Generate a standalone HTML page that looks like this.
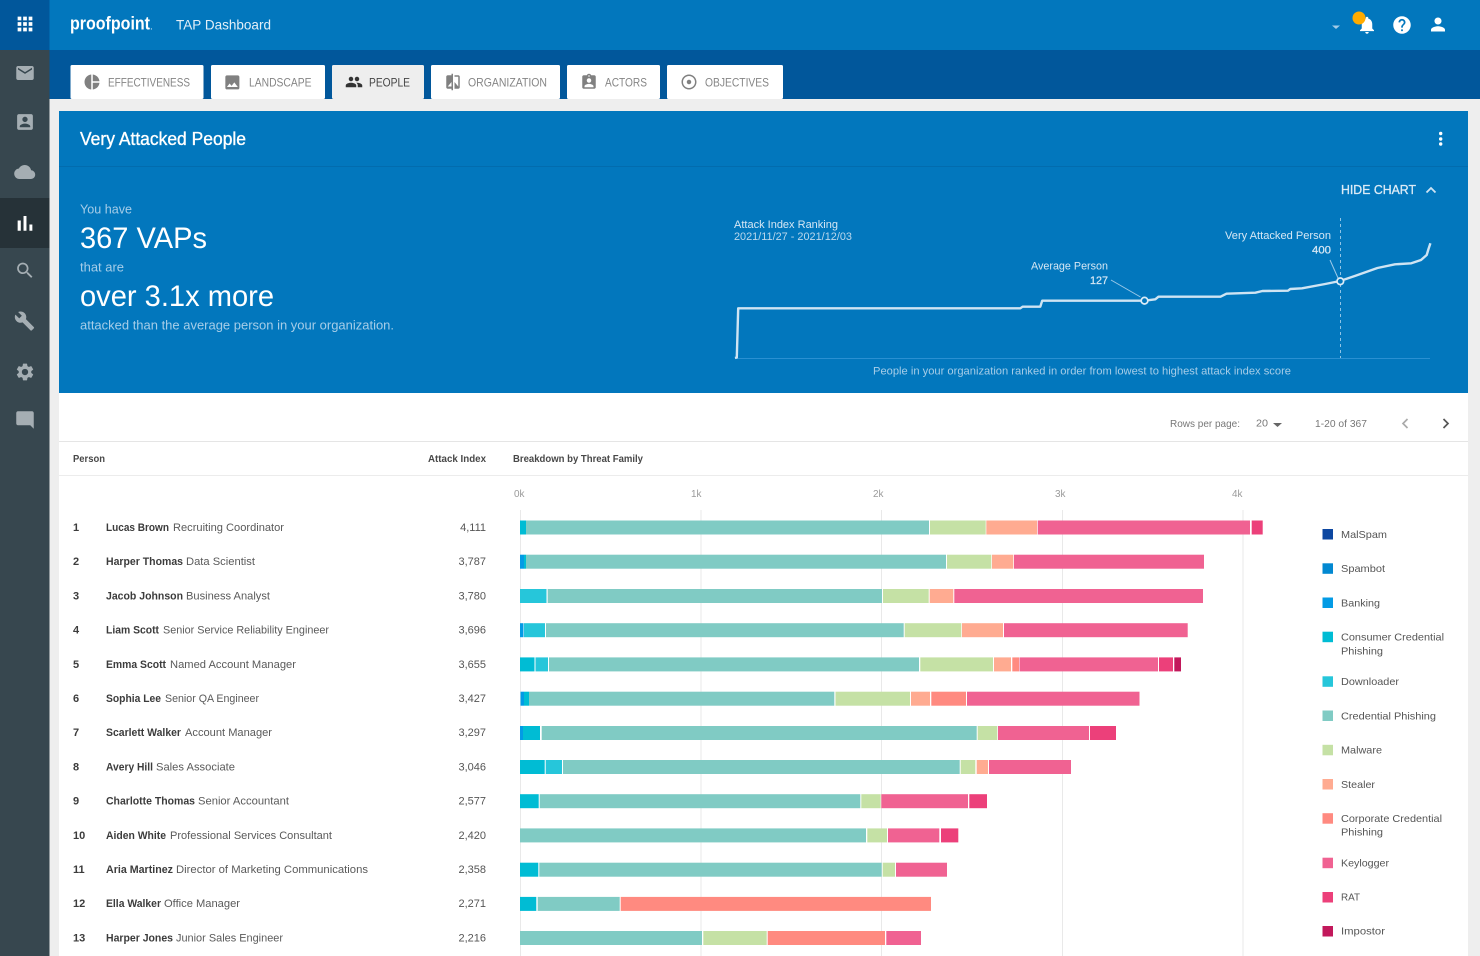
<!DOCTYPE html>
<html lang="en">
<head>
<meta charset="utf-8">
<title>TAP Dashboard - Very Attacked People</title>
<style>
html,body{margin:0;padding:0;width:1480px;height:956px;overflow:hidden;background:#eee}
svg{display:block;font-family:"Liberation Sans",sans-serif;filter:blur(.3px)}
text{dominant-baseline:central;white-space:pre}
.side{fill:#a5aeb3}
.tabi{fill:#808080}
.tabt{font-size:12px;fill:#858585}
.n{font-size:11px;font-weight:700;fill:#3c3c3c}
.t{font-size:11px;fill:#5a5a5a}
.r{font-size:11px;font-weight:700;fill:#3c3c3c}
.v{font-size:11px;fill:#555;text-anchor:end}
.h{font-size:10.5px;font-weight:700;fill:#484848}
.ax{font-size:10.5px;fill:#9a9a9a}
.lg{font-size:10.5px;fill:#555;transform:translateY(.4px)}
.pg{font-size:10.5px;fill:#777}
.lt{font-size:13px;fill:#a6cde8}
.big{font-size:30px;fill:#fff;transform:translateY(.5px)}
.ct{font-size:11px;fill:#d6e7f4}
.cap{font-size:11px;fill:#a6cde8}
.n,.t,.r,.v,.ax,.ct,.cap{transform:translateY(.8px)}
.h,.pg,.tabt{transform:translateY(.2px)}
.grid{stroke:#e9e9e9;stroke-width:1}
.a{fill:#0d47a1}.b{fill:#0288d1}.c{fill:#039be5}.d{fill:#00bcd4}.e{fill:#26c6da}.f{fill:#80cbc4}.g{fill:#c5e1a5}.s{fill:#ffab91}.o{fill:#ff8a80}.k{fill:#f06292}.m{fill:#ec407a}.p{fill:#c2185b}
</style>
</head>
<body>
<svg xmlns="http://www.w3.org/2000/svg" width="1480" height="956" viewBox="0 0 1480 956">
<!-- backgrounds -->
<rect width="1480" height="956" fill="#eeeeee"/>
<rect x="0" y="0" width="1480" height="50" fill="#0277bd"/>
<rect x="49" y="50" width="1431" height="49" fill="#01579b"/>
<rect x="0" y="50" width="49.500" height="906" fill="#37474f"/>
<rect x="0" y="0" width="49.500" height="50" fill="#01579b"/>
<rect x="0" y="198" width="49.500" height="50" fill="#263238"/>

<!-- sidebar icons -->
<path fill="#fff" transform="translate(13.960 12.960) scale(.92)" d="M4 8h4V4H4v4zm6 12h4v-4h-4v4zm-6 0h4v-4H4v4zm0-6h4v-4H4v4zm6 0h4v-4h-4v4zm6-10v4h4V4h-4zm-6 4h4V4h-4v4zm6 6h4v-4h-4v4zm0 6h4v-4h-4v4z"/>
<path class="side" transform="translate(14.500 62.500) scale(.875)" d="M20 4H4c-1.100 0-1.990.9-1.990 2L2 18c0 1.100.9 2 2 2h16c1.100 0 2-.9 2-2V6c0-1.100-.9-2-2-2zm0 4l-8 5-8-5V6l8 5 8-5v2z"/>
<path class="side" transform="translate(14.500 111.500) scale(.875)" d="M3 5v14c0 1.100.89 2 2 2h14c1.100 0 2-.9 2-2V5c0-1.100-.9-2-2-2H5c-1.110 0-2 .9-2 2zm12 4c0 1.660-1.340 3-3 3s-3-1.340-3-3 1.340-3 3-3 3 1.340 3 3zm-9 8c0-2 4-3.100 6-3.100s6 1.100 6 3.100v1H6v-1z"/>
<path class="side" transform="translate(14.200 161.500) scale(.875)" d="M19.350 10.040C18.670 6.590 15.640 4 12 4 9.110 4 6.600 5.640 5.350 8.040 2.340 8.360 0 10.910 0 14c0 3.310 2.690 6 6 6h13c2.760 0 5-2.240 5-5 0-2.640-2.050-4.780-4.650-4.960z"/>
<path fill="#fff" transform="translate(12.400 210.800) scale(1.050)" d="M5 9.200h3V19H5zM10.600 5h2.800v14h-2.800zm5.600 8H19v6h-2.800z"/>
<path class="side" transform="translate(14.500 260) scale(.875)" d="M15.500 14h-.79l-.28-.27C15.410 12.590 16 11.110 16 9.500 16 5.910 13.090 3 9.500 3S3 5.910 3 9.500 5.910 16 9.500 16c1.610 0 3.090-.59 4.230-1.570l.27.28v.79l5 4.990L20.490 19l-4.990-5zm-6 0C7.010 14 5 11.990 5 9.500S7.010 5 9.500 5 14 7.010 14 9.500 11.990 14 9.500 14z"/>
<path class="side" transform="translate(14 310.500) scale(.875)" d="M22.700 19l-9.100-9.100c.9-2.300.4-5-1.500-6.900-2-2-5-2.400-7.400-1.300L9 6 6 9 1.600 4.700C.4 7.100.9 10.100 2.900 12.100c1.900 1.900 4.600 2.400 6.900 1.500l9.100 9.100c.4.4 1 .4 1.400 0l2.300-2.300c.5-.4.5-1.100.1-1.400z"/>
<path class="side" transform="translate(14.500 361.500) scale(.875)" d="M19.140 12.940c.04-.3.06-.61.06-.94 0-.32-.02-.64-.07-.94l2.030-1.580c.18-.14.23-.41.12-.61l-1.920-3.320c-.12-.22-.37-.29-.59-.22l-2.390.96c-.5-.38-1.030-.7-1.620-.94l-.36-2.540c-.04-.24-.24-.41-.48-.41h-3.840c-.24 0-.43.17-.47.41l-.36 2.540c-.59.24-1.130.57-1.620.94l-2.390-.96c-.22-.08-.47 0-.59.22L2.740 8.870c-.12.21-.08.47.12.61l2.030 1.580c-.05.3-.09.63-.09.94s.02.64.07.94l-2.030 1.580c-.18.14-.23.41-.12.61l1.920 3.320c.12.22.37.29.59.22l2.390-.96c.5.38 1.030.7 1.620.94l.36 2.540c.05.24.24.41.48.41h3.840c.24 0 .44-.17.47-.41l.36-2.540c.59-.24 1.130-.56 1.620-.94l2.390.96c.22.08.47 0 .59-.22l1.920-3.320c.12-.22.07-.47-.12-.61l-2.010-1.580zM12 15.600c-1.980 0-3.600-1.620-3.600-3.600s1.620-3.600 3.600-3.600 3.600 1.620 3.600 3.600-1.620 3.600-3.600 3.600z"/>
<path class="side" transform="translate(25 420) scale(-.875 .875) translate(-12 -12)" d="M20 2H4c-1.100 0-2 .9-2 2v18l4-4h14c1.100 0 2-.9 2-2V4c0-1.100-.9-2-2-2z"/>

<!-- top bar -->
<text x="70" y="23.500" font-size="18" font-weight="700" fill="#fff" textLength="80" lengthAdjust="spacingAndGlyphs">proofpoint</text>
<text x="150" y="27" font-size="10" fill="#d8e9f5">.</text>
<text x="176" y="24.500" font-size="14" fill="#e3eff8" textLength="95" lengthAdjust="spacingAndGlyphs">TAP Dashboard</text>
<path fill="#a3cbe7" d="M1332 25.500h8l-4 3.500z"/>
<path fill="#fff" transform="translate(1356.500 14.500) scale(.875)" d="M12 22c1.100 0 2-.9 2-2h-4c0 1.100.89 2 2 2zm6-6v-5c0-3.070-1.640-5.640-4.500-6.320V4c0-.83-.67-1.500-1.500-1.500s-1.500.67-1.500 1.500v.68C7.630 5.360 6 7.920 6 11v5l-2 2v1h16v-1l-2-2z"/>
<circle cx="1359" cy="18" r="6.500" fill="#ffab00"/>
<path fill="#fff" transform="translate(1391.500 14.500) scale(.875)" d="M12 2C6.480 2 2 6.480 2 12s4.480 10 10 10 10-4.480 10-10S17.520 2 12 2zm1 17h-2v-2h2v2zm2.070-7.750l-.9.92C13.450 12.900 13 13.500 13 15h-2v-.5c0-1.100.45-2.100 1.170-2.830l1.240-1.260c.37-.36.59-.86.59-1.410 0-1.100-.9-2-2-2s-2 .9-2 2H8c0-2.210 1.790-4 4-4s4 1.790 4 4c0 .88-.36 1.680-.93 2.250z"/>
<path fill="#fff" transform="translate(1427.500 14) scale(.875)" d="M12 12c2.210 0 4-1.790 4-4s-1.790-4-4-4-4 1.790-4 4 1.790 4 4 4zm0 2c-2.670 0-8 1.340-8 4v2h16v-2c0-2.660-5.330-4-8-4z"/>

<!-- tabs -->
<rect x="70.500" y="65" width="133" height="34" rx="1.500" fill="#fff"/>
<rect x="211" y="65" width="114" height="34" rx="1.500" fill="#fff"/>
<rect x="332" y="65" width="92" height="34" rx="1.500" fill="#eeeeee"/>
<rect x="431" y="65" width="129" height="34" rx="1.500" fill="#fff"/>
<rect x="567" y="65" width="93" height="34" rx="1.500" fill="#fff"/>
<rect x="667" y="65" width="116" height="34" rx="1.500" fill="#fff"/>
<path class="tabi" transform="translate(83 73) scale(.75)" d="M11 2v20c-5.070-.5-9-4.790-9-10s3.930-9.500 9-10zm2.030 0v8.990H22c-.47-4.740-4.240-8.520-8.970-8.990zm0 11.010V22c4.740-.47 8.500-4.250 8.970-8.990h-8.970z"/>
<text class="tabt" x="108" y="82.500" textLength="82" lengthAdjust="spacingAndGlyphs">EFFECTIVENESS</text>
<path class="tabi" transform="translate(223 73) scale(.78)" d="M21 19V5c0-1.100-.9-2-2-2H5c-1.100 0-2 .9-2 2v14c0 1.100.9 2 2 2h14c1.100 0 2-.9 2-2zM8.500 13.500l2.500 3.010L14.500 12l4.500 6H5l3.500-4.500z"/>
<text class="tabt" x="249" y="82.500" textLength="62.500" lengthAdjust="spacingAndGlyphs">LANDSCAPE</text>
<path fill="#333" transform="translate(345 73) scale(.75)" d="M16 11c1.660 0 2.990-1.340 2.990-3S17.660 5 16 5c-1.660 0-3 1.340-3 3s1.340 3 3 3zm-8 0c1.660 0 2.990-1.340 2.990-3S9.660 5 8 5C6.340 5 5 6.340 5 8s1.340 3 3 3zm0 2c-2.330 0-7 1.170-7 3.500V19h14v-2.500c0-2.330-4.670-3.500-7-3.500zm8 0c-.29 0-.62.02-.97.05 1.160.84 1.970 1.970 1.970 3.450V19h6v-2.500c0-2.330-4.670-3.500-7-3.500z"/>
<text class="tabt" style="fill:#444" x="369" y="82.500" textLength="41" lengthAdjust="spacingAndGlyphs">PEOPLE</text>
<path class="tabi" transform="translate(444 73) scale(.75)" d="M10 3H5c-1.100 0-2 .9-2 2v14c0 1.100.9 2 2 2h5v2h2V1h-2v2zm0 15H5l5-6v6zm9-15h-5v2h5v13l-5-6v9h5c1.100 0 2-.9 2-2V5c0-1.100-.9-2-2-2z"/>
<text class="tabt" x="468" y="82.500" textLength="79" lengthAdjust="spacingAndGlyphs">ORGANIZATION</text>
<path class="tabi" transform="translate(580 73) scale(.75)" d="M19 3h-4.180C14.400 1.840 13.300 1 12 1c-1.300 0-2.400.84-2.820 2H5c-1.100 0-2 .9-2 2v14c0 1.100.9 2 2 2h14c1.100 0 2-.9 2-2V5c0-1.100-.9-2-2-2zm-7 0c.55 0 1 .45 1 1s-.45 1-1 1-1-.45-1-1 .45-1 1-1zm0 4c1.660 0 3 1.340 3 3s-1.340 3-3 3-3-1.340-3-3 1.340-3 3-3zm6 12H6v-1.400c0-2 4-3.100 6-3.100s6 1.100 6 3.100V19z"/>
<text class="tabt" x="605" y="82.500" textLength="42" lengthAdjust="spacingAndGlyphs">ACTORS</text>
<path class="tabi" transform="translate(680 73) scale(.75)" d="M12 2C6.490 2 2 6.490 2 12s4.490 10 10 10 10-4.490 10-10S17.510 2 12 2zm0 18c-4.410 0-8-3.590-8-8s3.590-8 8-8 8 3.590 8 8-3.590 8-8 8zm3-8c0 1.660-1.340 3-3 3s-3-1.340-3-3 1.340-3 3-3 3 1.340 3 3z"/>
<text class="tabt" x="705" y="82.500" textLength="64" lengthAdjust="spacingAndGlyphs">OBJECTIVES</text>

<!-- panel -->
<rect x="59" y="393" width="1409" height="563" fill="#fff"/>
<rect x="59" y="111" width="1409" height="282" fill="#0277bd"/>
<rect x="59" y="166" width="1409" height="1" fill="#026cae"/>
<text x="80" y="139" font-size="18" fill="#fff" stroke="#fff" stroke-width=".35" textLength="166" lengthAdjust="spacingAndGlyphs">Very Attacked People</text>
<circle cx="1440.700" cy="133.500" r="1.700" fill="#fff"/><circle cx="1440.700" cy="139" r="1.700" fill="#fff"/><circle cx="1440.700" cy="144" r="1.700" fill="#fff"/>

<text class="lt" x="80" y="209" textLength="52" lengthAdjust="spacingAndGlyphs">You have</text>
<text class="big" x="80" y="238" textLength="127" lengthAdjust="spacingAndGlyphs">367 VAPs</text>
<text class="lt" x="80" y="267" textLength="44" lengthAdjust="spacingAndGlyphs">that are</text>
<text class="big" x="80" y="296" textLength="194" lengthAdjust="spacingAndGlyphs">over 3.1x more</text>
<text class="lt" x="80" y="325" textLength="314" lengthAdjust="spacingAndGlyphs">attacked than the average person in your organization.</text>

<text x="1341" y="190" font-size="12.500" fill="#dcebf6" stroke="#dcebf6" stroke-width=".3" textLength="75" lengthAdjust="spacingAndGlyphs">HIDE CHART</text>
<path fill="none" stroke="#cfe3f2" stroke-width="1.800" d="M1426.500 192.500l4.500-4.500 4.500 4.500"/>

<!-- ranking chart -->
<text class="ct" x="734" y="224" textLength="104" lengthAdjust="spacingAndGlyphs">Attack Index Ranking</text>
<text class="ct" style="fill:#bcd8ec" x="734" y="236" textLength="118" lengthAdjust="spacingAndGlyphs">2021/11/27 - 2021/12/03</text>
<path stroke="#2a90d2" stroke-width="1" d="M735 358.500H1430"/>
<path stroke="#8fc4e6" stroke-width="1" stroke-dasharray="3 3" d="M1340.500 218V358"/>
<path fill="none" stroke="#9cc9e8" stroke-width="1" d="M1111 280L1140.500 297M1330 260L1338 278"/>
<path fill="none" stroke="#cfe4f3" stroke-width="2.400" stroke-linejoin="round" d="M735 358L736.800 357.500L738.200 308.300H1020.300L1022.600 306.700H1040.300L1042.200 300.700H1144.600L1155.300 299.300L1158.500 296.700H1220.500L1226.500 293.700L1255.400 292.700L1262.400 291L1288 290.700L1290.300 289L1302 288.300L1325.200 284L1340 281L1355.500 275.700L1377.400 268L1395 264.300L1411.300 263.300L1421 260L1426.700 255L1428.500 249L1430.400 243.300"/>
<circle cx="1144.500" cy="300.700" r="3.300" fill="#0277bd" stroke="#dcebf6" stroke-width="1.700"/>
<circle cx="1340.300" cy="281.300" r="3.300" fill="#0277bd" stroke="#dcebf6" stroke-width="1.700"/>
<text class="ct" x="1031" y="265.500" textLength="77" lengthAdjust="spacingAndGlyphs">Average Person</text>
<text class="ct" x="1090" y="280" textLength="18" lengthAdjust="spacingAndGlyphs" stroke="#d6e7f4" stroke-width=".25">127</text>
<text class="ct" x="1225" y="235" textLength="106" lengthAdjust="spacingAndGlyphs">Very Attacked Person</text>
<text class="ct" x="1312" y="249.500" textLength="19" lengthAdjust="spacingAndGlyphs" stroke="#d6e7f4" stroke-width=".25">400</text>
<text class="cap" x="873" y="370.500" textLength="418" lengthAdjust="spacingAndGlyphs">People in your organization ranked in order from lowest to highest attack index score</text>

<!-- pager -->
<text class="pg" x="1170" y="424" textLength="70" lengthAdjust="spacingAndGlyphs">Rows per page:</text>
<text class="pg" x="1256" y="423.500" textLength="12" lengthAdjust="spacingAndGlyphs">20</text>
<path fill="#666" d="M1273 423h9l-4.500 4z"/>
<text class="pg" x="1315" y="424" textLength="52" lengthAdjust="spacingAndGlyphs">1-20 of 367</text>
<path fill="none" stroke="#aaa" stroke-width="1.700" d="M1407.500 419l-4.500 4.500 4.500 4.500"/>
<path fill="none" stroke="#555" stroke-width="1.700" d="M1443.500 419l4.500 4.500-4.500 4.500"/>

<!-- table header -->
<rect x="59" y="441" width="1409" height="1" fill="#e5e5e5"/>
<rect x="59" y="475" width="1409" height="1" fill="#ececec"/>
<text class="h" x="73" y="459" textLength="32" lengthAdjust="spacingAndGlyphs">Person</text>
<text class="h" x="428" y="459" textLength="58" lengthAdjust="spacingAndGlyphs">Attack Index</text>
<text class="h" x="513" y="459" textLength="130" lengthAdjust="spacingAndGlyphs">Breakdown by Threat Family</text>

<!-- axis -->
<text class="ax" x="514" y="493" textLength="10.500" lengthAdjust="spacingAndGlyphs">0k</text>
<text class="ax" x="691" y="493" textLength="10.500" lengthAdjust="spacingAndGlyphs">1k</text>
<text class="ax" x="873" y="493" textLength="10.500" lengthAdjust="spacingAndGlyphs">2k</text>
<text class="ax" x="1055" y="493" textLength="10.500" lengthAdjust="spacingAndGlyphs">3k</text>
<text class="ax" x="1232" y="493" textLength="10.500" lengthAdjust="spacingAndGlyphs">4k</text>
<path class="grid" d="M520.500 510V956M701 510V956M881.500 510V956M1062.500 510V956M1243 510V956"/>

<!-- rows -->
<text class="r" x="73" y="527">1</text><text class="n" x="106" y="527" textLength="63" lengthAdjust="spacingAndGlyphs">Lucas Brown</text><text class="t" x="173" y="527" textLength="111" lengthAdjust="spacingAndGlyphs">Recruiting Coordinator</text><text class="v" x="486" y="527">4,111</text>
<rect class="d" x="520" y="520.500" width="6" height="14"/><rect class="f" x="526" y="520.500" width="403" height="14"/><rect class="g" x="930" y="520.500" width="55.700" height="14"/><rect class="s" x="986.300" y="520.500" width="50.700" height="14"/><rect class="k" x="1037.700" y="520.500" width="212.300" height="14"/><rect class="m" x="1251.700" y="520.500" width="11" height="14"/>

<text class="r" x="73" y="561">2</text><text class="n" x="106" y="561" textLength="77" lengthAdjust="spacingAndGlyphs">Harper Thomas</text><text class="t" x="186" y="561" textLength="69" lengthAdjust="spacingAndGlyphs">Data Scientist</text><text class="v" x="486" y="561">3,787</text>
<rect class="c" x="520" y="554.700" width="4" height="14"/><rect class="d" x="524" y="554.700" width="2" height="14"/><rect class="f" x="526" y="554.700" width="420" height="14"/><rect class="g" x="947" y="554.700" width="44.300" height="14"/><rect class="s" x="992" y="554.700" width="21.300" height="14"/><rect class="k" x="1014" y="554.700" width="190" height="14"/>

<text class="r" x="73" y="595.500">3</text><text class="n" x="106" y="595.500" textLength="77" lengthAdjust="spacingAndGlyphs">Jacob Johnson</text><text class="t" x="186" y="595.500" textLength="84" lengthAdjust="spacingAndGlyphs">Business Analyst</text><text class="v" x="486" y="595.500">3,780</text>
<rect class="e" x="520" y="589" width="26.500" height="14"/><rect class="f" x="547.700" y="589" width="334.300" height="14"/><rect class="g" x="883" y="589" width="45.700" height="14"/><rect class="s" x="929.700" y="589" width="23.600" height="14"/><rect class="k" x="954.300" y="589" width="248.700" height="14"/>

<text class="r" x="73" y="629.700">4</text><text class="n" x="106" y="629.700" textLength="53" lengthAdjust="spacingAndGlyphs">Liam Scott</text><text class="t" x="163" y="629.700" textLength="166" lengthAdjust="spacingAndGlyphs">Senior Service Reliability Engineer</text><text class="v" x="486" y="629.700">3,696</text>
<rect class="c" x="520" y="623.200" width="3.500" height="14"/><rect class="e" x="524" y="623.200" width="21" height="14"/><rect class="f" x="546" y="623.200" width="357.700" height="14"/><rect class="g" x="904.700" y="623.200" width="56.600" height="14"/><rect class="s" x="962" y="623.200" width="41" height="14"/><rect class="k" x="1004" y="623.200" width="183.700" height="14"/>

<text class="r" x="73" y="664">5</text><text class="n" x="106" y="664" textLength="60" lengthAdjust="spacingAndGlyphs">Emma Scott</text><text class="t" x="170" y="664" textLength="126" lengthAdjust="spacingAndGlyphs">Named Account Manager</text><text class="v" x="486" y="664">3,655</text>
<rect class="d" x="520" y="657.400" width="14.500" height="14"/><rect class="e" x="535.500" y="657.400" width="12.500" height="14"/><rect class="f" x="549" y="657.400" width="370" height="14"/><rect class="g" x="920.300" y="657.400" width="72.700" height="14"/><rect class="s" x="994" y="657.400" width="17" height="14"/><rect class="o" x="1012.300" y="657.400" width="6.700" height="14"/><rect class="k" x="1019.500" y="657.400" width="138.500" height="14"/><rect class="m" x="1159" y="657.400" width="14" height="14"/><rect class="p" x="1174.300" y="657.400" width="6.700" height="14"/>

<text class="r" x="73" y="698">6</text><text class="n" x="106" y="698" textLength="55" lengthAdjust="spacingAndGlyphs">Sophia Lee</text><text class="t" x="165" y="698" textLength="94" lengthAdjust="spacingAndGlyphs">Senior QA Engineer</text><text class="v" x="486" y="698">3,427</text>
<rect class="c" x="520.500" y="691.700" width="3.500" height="14"/><rect class="d" x="524" y="691.700" width="5" height="14"/><rect class="f" x="529" y="691.700" width="305.300" height="14"/><rect class="g" x="835.500" y="691.700" width="74.500" height="14"/><rect class="s" x="911" y="691.700" width="19" height="14"/><rect class="o" x="931.300" y="691.700" width="34.700" height="14"/><rect class="k" x="967" y="691.700" width="172.500" height="14"/>

<text class="r" x="73" y="732.300">7</text><text class="n" x="106" y="732.300" textLength="75" lengthAdjust="spacingAndGlyphs">Scarlett Walker</text><text class="t" x="185" y="732.300" textLength="87" lengthAdjust="spacingAndGlyphs">Account Manager</text><text class="v" x="486" y="732.300">3,297</text>
<rect class="c" x="520" y="726" width="3" height="14"/><rect class="d" x="523" y="726" width="17" height="14"/><rect class="f" x="541.700" y="726" width="435" height="14"/><rect class="g" x="977.700" y="726" width="19.600" height="14"/><rect class="k" x="998" y="726" width="91" height="14"/><rect class="m" x="1090" y="726" width="26" height="14"/>

<text class="r" x="73" y="766.500">8</text><text class="n" x="106" y="766.500" textLength="47" lengthAdjust="spacingAndGlyphs">Avery Hill</text><text class="t" x="156" y="766.500" textLength="79" lengthAdjust="spacingAndGlyphs">Sales Associate</text><text class="v" x="486" y="766.500">3,046</text>
<rect class="d" x="520" y="760" width="24.700" height="14"/><rect class="e" x="545.700" y="760" width="16.300" height="14"/><rect class="f" x="563" y="760" width="396.700" height="14"/><rect class="g" x="960.700" y="760" width="14.600" height="14"/><rect class="s" x="976.700" y="760" width="11.300" height="14"/><rect class="k" x="989" y="760" width="82" height="14"/>

<text class="r" x="73" y="800.700">9</text><text class="n" x="106" y="800.700" textLength="89" lengthAdjust="spacingAndGlyphs">Charlotte Thomas</text><text class="t" x="198" y="800.700" textLength="91" lengthAdjust="spacingAndGlyphs">Senior Accountant</text><text class="v" x="486" y="800.700">2,577</text>
<rect class="d" x="520" y="794.200" width="18.700" height="14"/><rect class="f" x="539.700" y="794.200" width="320.600" height="14"/><rect class="g" x="861.300" y="794.200" width="19.400" height="14"/><rect class="k" x="881.300" y="794.200" width="86.700" height="14"/><rect class="m" x="969.300" y="794.200" width="17.700" height="14"/>

<text class="r" x="73" y="835">10</text><text class="n" x="106" y="835" textLength="60" lengthAdjust="spacingAndGlyphs">Aiden White</text><text class="t" x="170" y="835" textLength="162" lengthAdjust="spacingAndGlyphs">Professional Services Consultant</text><text class="v" x="486" y="835">2,420</text>
<rect class="f" x="520" y="828.400" width="346" height="14"/><rect class="g" x="867.300" y="828.400" width="19.700" height="14"/><rect class="k" x="888" y="828.400" width="51.300" height="14"/><rect class="m" x="941" y="828.400" width="17.300" height="14"/>

<text class="r" x="73" y="869">11</text><text class="n" x="106" y="869" textLength="67" lengthAdjust="spacingAndGlyphs">Aria Martinez</text><text class="t" x="176" y="869" textLength="192" lengthAdjust="spacingAndGlyphs">Director of Marketing Communications</text><text class="v" x="486" y="869">2,358</text>
<rect class="d" x="520" y="862.700" width="18.300" height="14"/><rect class="f" x="539.300" y="862.700" width="342.400" height="14"/><rect class="g" x="882.700" y="862.700" width="12.300" height="14"/><rect class="k" x="896" y="862.700" width="51" height="14"/>

<text class="r" x="73" y="903.300">12</text><text class="n" x="106" y="903.300" textLength="55" lengthAdjust="spacingAndGlyphs">Ella Walker</text><text class="t" x="164" y="903.300" textLength="76" lengthAdjust="spacingAndGlyphs">Office Manager</text><text class="v" x="486" y="903.300">2,271</text>
<rect class="d" x="520" y="896.900" width="16.300" height="14"/><rect class="f" x="537.700" y="896.900" width="82" height="14"/><rect class="o" x="620.700" y="896.900" width="310.300" height="14"/>

<text class="r" x="73" y="937.500">13</text><text class="n" x="106" y="937.500" textLength="67" lengthAdjust="spacingAndGlyphs">Harper Jones</text><text class="t" x="176" y="937.500" textLength="107" lengthAdjust="spacingAndGlyphs">Junior Sales Engineer</text><text class="v" x="486" y="937.500">2,216</text>
<rect class="f" x="520" y="931" width="182" height="14"/><rect class="g" x="703.300" y="931" width="63.400" height="14"/><rect class="o" x="767.700" y="931" width="117.300" height="14"/><rect class="k" x="886.300" y="931" width="34.700" height="14"/>

<!-- legend -->
<rect class="a" x="1322.500" y="529" width="10.500" height="10.500"/><text class="lg" x="1341" y="534.500" textLength="46" lengthAdjust="spacingAndGlyphs">MalSpam</text>
<rect class="b" x="1322.500" y="563.300" width="10.500" height="10.500"/><text class="lg" x="1341" y="568.500" textLength="44" lengthAdjust="spacingAndGlyphs">Spambot</text>
<rect class="c" x="1322.500" y="597.500" width="10.500" height="10.500"/><text class="lg" x="1341" y="603" textLength="39" lengthAdjust="spacingAndGlyphs">Banking</text>
<rect class="d" x="1322.500" y="631.700" width="10.500" height="10.500"/><text class="lg" x="1341" y="637" textLength="103" lengthAdjust="spacingAndGlyphs">Consumer Credential</text><text class="lg" x="1341" y="651" textLength="42" lengthAdjust="spacingAndGlyphs">Phishing</text>
<rect class="e" x="1322.500" y="676.300" width="10.500" height="10.500"/><text class="lg" x="1341" y="681.500" textLength="58" lengthAdjust="spacingAndGlyphs">Downloader</text>
<rect class="f" x="1322.500" y="710.500" width="10.500" height="10.500"/><text class="lg" x="1341" y="716" textLength="95" lengthAdjust="spacingAndGlyphs">Credential Phishing</text>
<rect class="g" x="1322.500" y="744.800" width="10.500" height="10.500"/><text class="lg" x="1341" y="750" textLength="41" lengthAdjust="spacingAndGlyphs">Malware</text>
<rect class="s" x="1322.500" y="779" width="10.500" height="10.500"/><text class="lg" x="1341" y="784.500" textLength="34" lengthAdjust="spacingAndGlyphs">Stealer</text>
<rect class="o" x="1322.500" y="813.200" width="10.500" height="10.500"/><text class="lg" x="1341" y="818.500" textLength="101" lengthAdjust="spacingAndGlyphs">Corporate Credential</text><text class="lg" x="1341" y="832" textLength="42" lengthAdjust="spacingAndGlyphs">Phishing</text>
<rect class="k" x="1322.500" y="857.700" width="10.500" height="10.500"/><text class="lg" x="1341" y="863" textLength="48" lengthAdjust="spacingAndGlyphs">Keylogger</text>
<rect class="m" x="1322.500" y="892" width="10.500" height="10.500"/><text class="lg" x="1341" y="897" textLength="19" lengthAdjust="spacingAndGlyphs">RAT</text>
<rect class="p" x="1322.500" y="926" width="10.500" height="10.500"/><text class="lg" x="1341" y="931" textLength="44" lengthAdjust="spacingAndGlyphs">Impostor</text>
</svg>
</body>
</html>
